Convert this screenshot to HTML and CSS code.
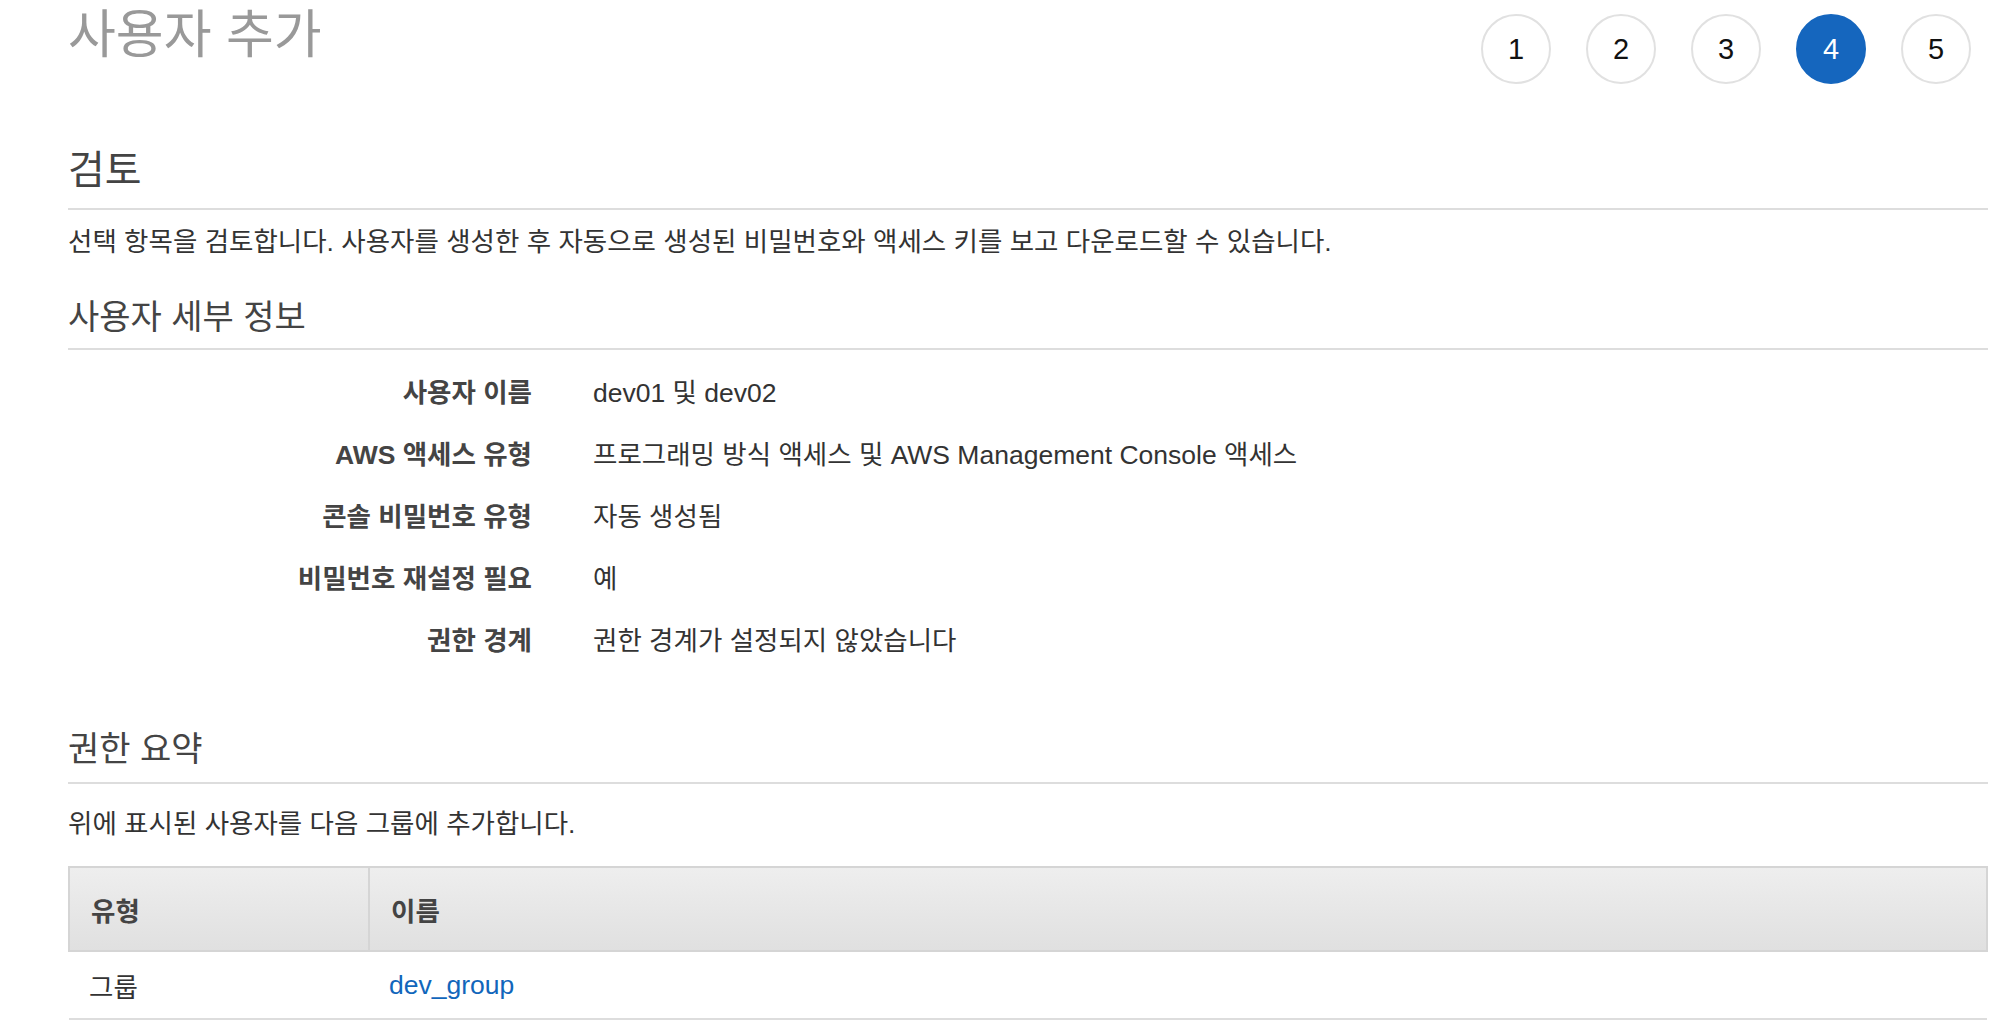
FILE: index.html
```html
<!DOCTYPE html>
<html lang="ko">
<head>
    <meta charset="UTF-8">
    <meta name="viewport" content="width=device-width, initial-scale=1.0">
    <title>사용자 추가</title>
    <link rel="stylesheet" href="styles.css">
</head>
<body>
<div class="page">
    <div class="header">
        <h1 class="title">사용자 추가</h1>
        <ol class="steps">
            <li class="step">1</li>
            <li class="step">2</li>
            <li class="step">3</li>
            <li class="step active">4</li>
            <li class="step">5</li>
        </ol>
    </div>

    <h2 class="section-title">검토</h2>
    <p class="intro">선택 항목을 검토합니다. 사용자를 생성한 후 자동으로 생성된 비밀번호와 액세스 키를 보고 다운로드할 수 있습니다.</p>

    <h3 class="sub-title">사용자 세부 정보</h3>
    <div class="details">
        <div class="label">사용자 이름</div>
        <div class="value">dev01 및 dev02</div>

        <div class="label">AWS 액세스 유형</div>
        <div class="value">프로그래밍 방식 액세스 및 AWS Management Console 액세스</div>

        <div class="label">콘솔 비밀번호 유형</div>
        <div class="value">자동 생성됨</div>

        <div class="label">비밀번호 재설정 필요</div>
        <div class="value">예</div>

        <div class="label">권한 경계</div>
        <div class="value">권한 경계가 설정되지 않았습니다</div>
    </div>

    <h3 class="sub-title summary-title">권한 요약</h3>
    <p class="note">위에 표시된 사용자를 다음 그룹에 추가합니다.</p>

    <table class="groups">
        <thead>
        <tr>
            <th class="col-type">유형</th>
            <th>이름</th>
        </tr>
        </thead>
        <tbody>
        <tr>
            <td>그룹</td>
            <td><a href="#">dev_group</a></td>
        </tr>
        </tbody>
    </table>
</div>
</body>
</html>
```

FILE: styles.css
```css
* {
    box-sizing: border-box;
    margin: 0;
    padding: 0;
}

body {
    background-color: #fff;
    color: #333;
    font-family: "Liberation Sans", "Noto Sans CJK KR", Arial, sans-serif;
    font-size: 26.5px;
}

.page {
    padding: 0 6px 0 68px;
}

.header {
    display: flex;
    justify-content: space-between;
    align-items: flex-start;
    height: 145px;
}

.title {
    font-size: 52px;
    font-weight: normal;
    line-height: 70px;
    color: #999;
}

.steps {
    display: flex;
    gap: 35px;
    list-style: none;
    margin: 14px 17px 0 0;
}

.step {
    width: 70px;
    height: 70px;
    border: 2px solid #e1e1e1;
    border-radius: 50%;
    display: flex;
    justify-content: center;
    align-items: center;
    font-size: 29px;
    color: #111;
}

.step.active {
    background-color: #1566be;
    border-color: #1566be;
    color: #fff;
}

.section-title {
    font-size: 40px;
    font-weight: normal;
    line-height: 50px;
    color: #444;
    padding-bottom: 13px;
    border-bottom: 2px solid #ddd;
}

.intro {
    margin-top: 15px;
    line-height: 34px;
}

.sub-title {
    margin-top: 36px;
    font-size: 34px;
    font-weight: normal;
    line-height: 44px;
    color: #444;
    padding-bottom: 9px;
    border-bottom: 2px solid #ddd;
}

.details {
    display: grid;
    grid-template-columns: 464px 1fr;
    column-gap: 61px;
    grid-auto-rows: 62px;
    align-items: center;
    margin-top: 9px;
}

.label {
    text-align: right;
    font-weight: bold;
    color: #444;
}

.summary-title {
    margin-top: 58px;
    padding-bottom: 11px;
}

.note {
    margin-top: 23px;
    line-height: 34px;
}

.groups {
    width: 100%;
    margin-top: 25px;
    border-collapse: collapse;
}

.groups th {
    height: 84px;
    padding: 0 21px;
    text-align: left;
    font-weight: bold;
    color: #444;
    background: linear-gradient(#eeeeee, #e0e0e0);
    border: 2px solid #d5d5d5;
}

.groups .col-type {
    width: 300px;
}

.groups td {
    height: 68px;
    padding: 0 20px;
    border-bottom: 2px solid #ddd;
}

.groups a {
    color: #1166bb;
    text-decoration: none;
}
```
